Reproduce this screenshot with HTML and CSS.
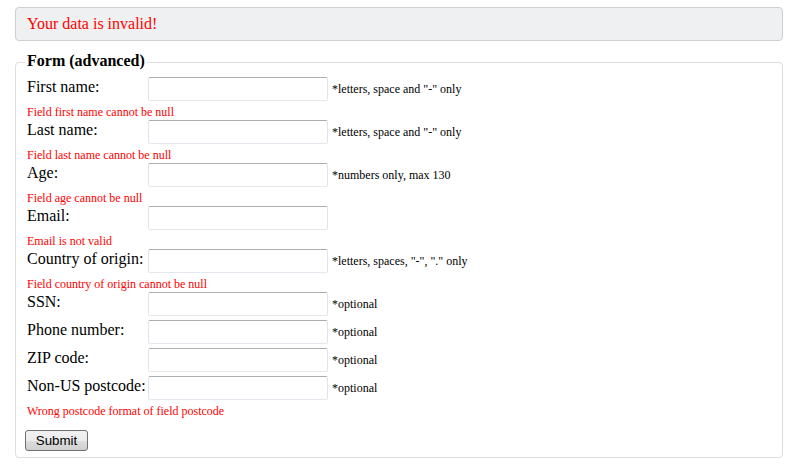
FILE: index.html
```html
<!DOCTYPE html>
<html>
<head>
<meta charset="utf-8">
<link rel="stylesheet" href="styles.css">
</head>
<body>
<div class="page">
  <div class="alert">Your data is invalid!</div>
  <form class="form">
    <fieldset class="fs">
      <legend class="legend">Form (advanced)</legend>

      <div class="row">
        <label class="label">First name:</label>
        <input class="field" type="text">
        <span class="hint">*letters, space and "-" only</span>
      </div>
      <div class="error">Field first name cannot be null</div>

      <div class="row">
        <label class="label">Last name:</label>
        <input class="field" type="text">
        <span class="hint">*letters, space and "-" only</span>
      </div>
      <div class="error">Field last name cannot be null</div>

      <div class="row">
        <label class="label">Age:</label>
        <input class="field" type="text">
        <span class="hint">*numbers only, max 130</span>
      </div>
      <div class="error">Field age cannot be null</div>

      <div class="row">
        <label class="label">Email:</label>
        <input class="field" type="text">
      </div>
      <div class="error">Email is not valid</div>

      <div class="row">
        <label class="label">Country of origin:</label>
        <input class="field" type="text">
        <span class="hint">*letters, spaces, "-", "." only</span>
      </div>
      <div class="error">Field country of origin cannot be null</div>

      <div class="row">
        <label class="label">SSN:</label>
        <input class="field" type="text">
        <span class="hint">*optional</span>
      </div>

      <div class="row">
        <label class="label">Phone number:</label>
        <input class="field" type="text">
        <span class="hint">*optional</span>
      </div>

      <div class="row">
        <label class="label">ZIP code:</label>
        <input class="field" type="text">
        <span class="hint">*optional</span>
      </div>

      <div class="row">
        <label class="label">Non-US postcode:</label>
        <input class="field" type="text">
        <span class="hint">*optional</span>
      </div>
      <div class="error">Wrong postcode format of field postcode</div>

      <button class="submit" type="button">Submit</button>
    </fieldset>
  </form>
</div>
</body>
</html>
```
FILE: styles.css
```css
html, body {
  margin: 0;
  padding: 0;
  background: #ffffff;
}

body {
  font-family: "Liberation Serif", "Times New Roman", serif;
  font-size: 16px;
  color: #000000;
}

.page {
  width: 768px;
  margin-left: 15px;
  padding-top: 7px;
}

.alert {
  box-sizing: border-box;
  height: 34px;
  padding: 7px 11px;
  line-height: 18px;
  font-size: 16px;
  color: #ff0000;
  background: #eff0f1;
  border: 1px solid #cfcfcf;
  border-radius: 4px;
}

.form {
  margin: 11px 0 0 0;
}

.fs {
  margin: 0;
  padding: 4px 9px 6px 9px;
  border: 1px solid #dedede;
  border-radius: 4px;
  min-width: 0;
}

.legend {
  padding: 0 2px 3px 2px;
  font-weight: bold;
  font-size: 16px;
  line-height: 18px;
}

.row {
  display: flex;
  align-items: flex-start;
  height: 24px;
  margin-bottom: 4px;
}

.label {
  box-sizing: border-box;
  width: 123px;
  flex: none;
  padding-left: 2px;
  padding-top: 1px;
  font-size: 16px;
  line-height: 18px;
  white-space: nowrap;
}

.field {
  box-sizing: border-box;
  flex: none;
  width: 180px;
  height: 24px;
  margin: 0;
  padding: 2px 4px;
  border: 1px solid #e2e3ea;
  border-top-color: #abadb3;
  border-bottom-color: #e3e9ef;
  border-radius: 2px;
  background: #ffffff;
  font-family: "Liberation Sans", Arial, sans-serif;
  font-size: 13px;
}

.hint {
  margin-left: 4px;
  padding-top: 5px;
  font-size: 12px;
  line-height: 15px;
  white-space: nowrap;
}

.error {
  height: 15px;
  padding-left: 2px;
  font-size: 12px;
  line-height: 15px;
  color: #ff0000;
}

.submit {
  display: block;
  box-sizing: border-box;
  width: 63px;
  height: 21px;
  margin-top: 11px;
  padding: 0;
  border: 1px solid #707070;
  border-radius: 3px;
  background: linear-gradient(to bottom, #f2f2f2 0%, #ebebeb 50%, #dddddd 51%, #cfcfcf 100%);
  font-family: "Liberation Sans", Arial, sans-serif;
  font-size: 13.33px;
  color: #000000;
  line-height: 17px;
}
```
